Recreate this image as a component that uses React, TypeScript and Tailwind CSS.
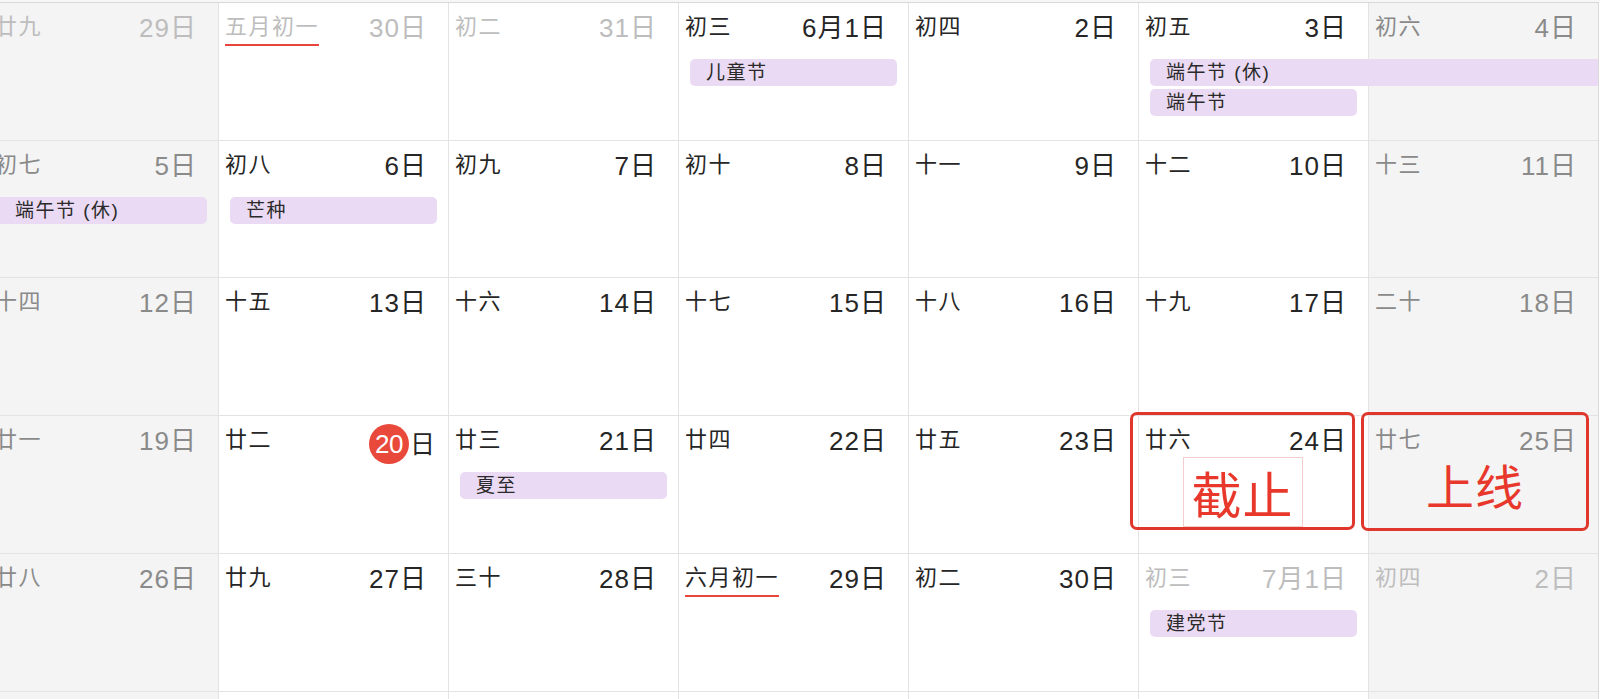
type Tone = "in" | "out" | "wkd";

type Day = {
  lunar: string;
  day: string;
  tone: Tone;
  weekend?: boolean;
  mark?: boolean;
  today?: boolean;
};

type Ev = {
  title: string;
  col: number;
  lane: 1 | 2;
  span?: 1 | 2;
  cont?: "left" | "right";
};

type Week = {
  h: string;
  days: Day[];
  events: Ev[];
  notes?: boolean;
};

const COL = ["col-start-1", "col-start-2", "col-start-3", "col-start-4", "col-start-5", "col-start-6", "col-start-7"];
const SPAN = { 1: "col-span-1", 2: "col-span-2" };
const LANE = { 1: "row-start-2", 2: "row-start-4" };

const TONE: Record<Tone, string> = {
  in: "text-[#262626]",
  out: "text-[#bdbdbd]",
  wkd: "text-[#8a8a8a]",
};

const d = (lunar: string, day: string, tone: Tone = "in", extra: Partial<Day> = {}): Day => ({
  lunar,
  day,
  tone,
  ...extra,
});

const weeks: Week[] = [
  {
    h: "h-[138px]",
    days: [
      d("廿九", "29日", "out", { weekend: true }),
      d("五月初一", "30日", "out", { mark: true }),
      d("初二", "31日", "out"),
      d("初三", "6月1日"),
      d("初四", "2日"),
      d("初五", "3日"),
      d("初六", "4日", "wkd", { weekend: true }),
    ],
    events: [
      { title: "儿童节", col: 3, lane: 1 },
      { title: "端午节 (休)", col: 5, lane: 1, span: 2, cont: "right" },
      { title: "端午节", col: 5, lane: 2 },
    ],
  },
  {
    h: "h-[137px]",
    days: [
      d("初七", "5日", "wkd", { weekend: true }),
      d("初八", "6日"),
      d("初九", "7日"),
      d("初十", "8日"),
      d("十一", "9日"),
      d("十二", "10日"),
      d("十三", "11日", "wkd", { weekend: true }),
    ],
    events: [
      { title: "端午节 (休)", col: 0, lane: 1, cont: "left" },
      { title: "芒种", col: 1, lane: 1 },
    ],
  },
  {
    h: "h-[138px]",
    days: [
      d("十四", "12日", "wkd", { weekend: true }),
      d("十五", "13日"),
      d("十六", "14日"),
      d("十七", "15日"),
      d("十八", "16日"),
      d("十九", "17日"),
      d("二十", "18日", "wkd", { weekend: true }),
    ],
    events: [],
  },
  {
    h: "h-[138px]",
    days: [
      d("廿一", "19日", "wkd", { weekend: true }),
      d("廿二", "20", "in", { today: true }),
      d("廿三", "21日"),
      d("廿四", "22日"),
      d("廿五", "23日"),
      d("廿六", "24日"),
      d("廿七", "25日", "wkd", { weekend: true }),
    ],
    events: [{ title: "夏至", col: 2, lane: 1 }],
    notes: true,
  },
  {
    h: "h-[138px]",
    days: [
      d("廿八", "26日", "wkd", { weekend: true }),
      d("廿九", "27日"),
      d("三十", "28日"),
      d("六月初一", "29日", "in", { mark: true }),
      d("初二", "30日"),
      d("初三", "7月1日", "out"),
      d("初四", "2日", "out", { weekend: true }),
    ],
    events: [{ title: "建党节", col: 5, lane: 1 }],
  },
  {
    h: "h-[138px]",
    days: [
      d("", "", "wkd", { weekend: true }),
      d("", ""),
      d("", ""),
      d("", ""),
      d("", ""),
      d("", ""),
      d("", "", "wkd", { weekend: true }),
    ],
    events: [],
  },
];

function DayCell({ day, col }: { day: Day; col: number }) {
  const tone = TONE[day.tone];
  return (
    <div
      className={`${COL[col]} row-start-1 row-end-6 flex items-start justify-between border-l border-[#e3e3e3] pt-[12px] pl-[6px] pr-[21px] ${
        day.weekend ? "bg-[#f4f4f4]" : "bg-white"
      }`}
    >
      <span
        className={`mt-[1px] text-[22px] leading-none tracking-[1.5px] ${tone} ${
          day.mark ? "border-b-2 border-[#e8453c] pb-[6px]" : ""
        }`}
      >
        {day.lunar}
      </span>
      {day.today ? (
        <span className="-mt-[4px] -mr-[8px] flex items-center text-[25px] leading-none text-[#262626]">
          <span className="mr-[1px] flex h-[40px] w-[40px] items-center justify-center rounded-full bg-[#e9493b] text-[26px] tracking-[-0.5px] text-white">
            {day.day}
          </span>
          日
        </span>
      ) : (
        <span className={`text-[26px] leading-none tracking-[1px] ${tone}`}>{day.day}</span>
      )}
    </div>
  );
}

function EventPill({ ev }: { ev: Ev }) {
  const shape =
    ev.cont === "right"
      ? "ml-[12px] rounded-l-[5px] pl-[16px]"
      : ev.cont === "left"
        ? "mr-[11px] rounded-r-[5px] pl-[27px]"
        : "ml-[12px] mr-[11px] rounded-[5px] pl-[16px]";
  return (
    <div
      className={`${COL[ev.col]} ${SPAN[ev.span ?? 1]} ${LANE[ev.lane]} flex items-center bg-[#ebdaf3] text-[19px] leading-none tracking-[1.5px] text-[#2a2a2a] ${shape}`}
    >
      {ev.title}
    </div>
  );
}

function Notes() {
  return (
    <>
      {/* 截止 */}
      <div className="col-start-6 row-start-1 row-end-6 -mt-[4px] -ml-[8px] flex h-[118px] w-[225px] flex-col items-center self-start overflow-hidden rounded-[7px] border-[3px] border-[#e0372c]">
        <div className="mt-[42px] flex h-[80px] w-[120px] justify-center border border-[#f6cdcd] pt-[14px]">
          <span className="text-[50px] leading-none tracking-[1px] text-[#e8382c]">截止</span>
        </div>
      </div>
      {/* 上线 */}
      <div className="col-start-7 row-start-1 row-end-6 -mt-[4px] -ml-[7px] flex h-[119px] w-[228px] flex-col items-center self-start rounded-[7px] border-[3px] border-[#e0372c]">
        <span className="mt-[50px] text-[48px] leading-none tracking-[1px] text-[#e8382c]">上线</span>
      </div>
    </>
  );
}

export default function App() {
  return (
    <div className="h-[699px] w-[1600px] overflow-hidden bg-white font-['Liberation_Sans','Noto_Sans_CJK_SC',sans-serif]">
      <div className="h-[2px] bg-[#f7f7f7]" />
      <div className="-ml-[12px] w-[1611px] border-t border-r border-[#d9d9d9]">
        {weeks.map((w, i) => (
          <div
            key={i}
            className={`grid ${w.h} grid-cols-[repeat(7,230px)] grid-rows-[56px_27px_3px_27px_1fr] border-b border-[#e3e3e3]`}
          >
            {w.days.map((day, c) => (
              <DayCell key={c} day={day} col={c} />
            ))}
            {w.events.map((ev, k) => (
              <EventPill key={k} ev={ev} />
            ))}
            {w.notes && <Notes />}
          </div>
        ))}
      </div>
    </div>
  );
}
